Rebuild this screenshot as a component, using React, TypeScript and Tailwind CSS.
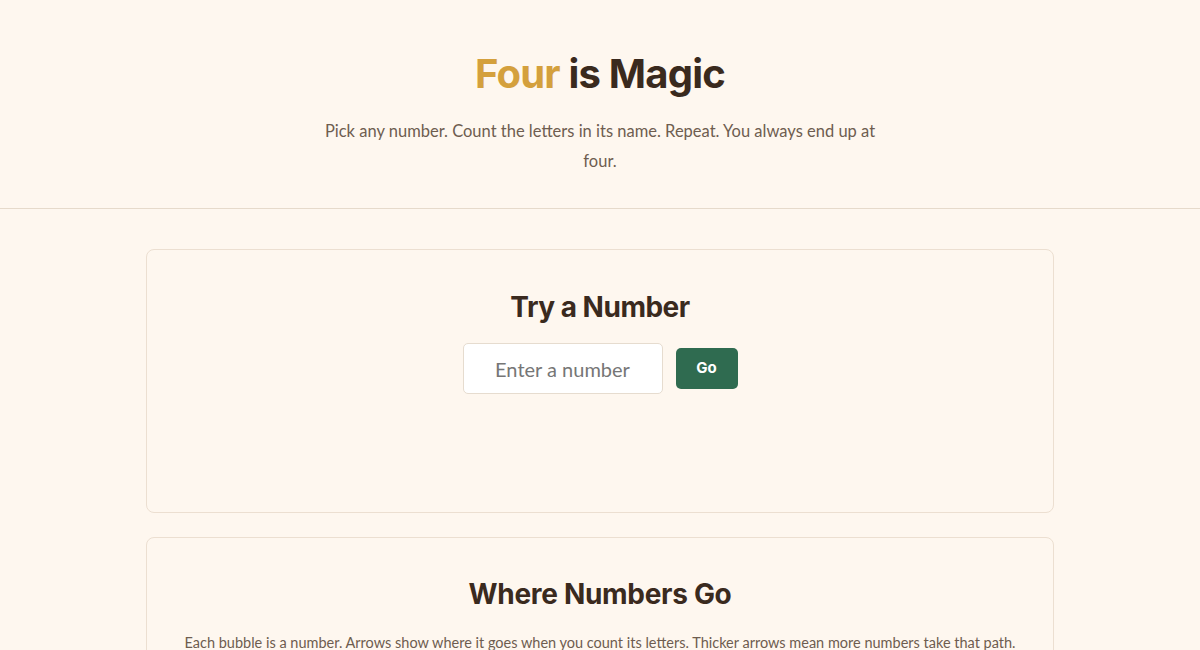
export default function App() {
    return (
        <div className="min-h-screen bg-[#fef7ef] text-[#3a2a1e]" style={{ fontFamily: 'Lato, "Open Sans", sans-serif' }}>
            {/* Header */}
            <header className="pt-[50px] pb-[32px] px-4 text-center border-b border-[#e6dacb]">
                <h1 className="text-[40px] leading-[48px] font-bold tracking-[-0.8px]" style={{ fontFamily: 'Inter, sans-serif' }}>
                    <span className="text-[#d4a03d]">Four</span> is Magic
                </h1>
                <p className="mt-[18px] mx-auto max-w-[575px] text-[16.5px] leading-[30px] text-[#6e5d50]">
                    Pick any number. Count the letters in its name. Repeat. You always end up at four.
                </p>
            </header>

            <main className="max-w-[908px] mx-auto pt-[40px] pb-10 flex flex-col gap-[24px]">
                {/* Try a number */}
                <section className="border border-[#ecdfd1] rounded-lg px-8 pt-[39px] pb-[118px] text-center">
                    <h2 className="text-[28px] leading-[36px] font-bold tracking-[-0.5px]" style={{ fontFamily: 'Inter, sans-serif' }}>
                        Try a Number
                    </h2>
                    <div className="mt-[18px] flex items-center justify-center gap-[13px]">
                        <input
                            type="text"
                            placeholder="Enter a number"
                            className="w-[200px] h-[51px] bg-white border border-[#e6dccf] rounded-[5px] text-center text-[20px] text-[#3a2a1e] placeholder:text-[#767676] outline-none"
                        />
                        <button className="w-[62px] h-[41px] bg-[#2f6b50] text-white text-[15px] font-bold rounded-[5px]" style={{ fontFamily: 'Inter, sans-serif' }}>
                            Go
                        </button>
                    </div>
                </section>

                {/* Where numbers go */}
                <section className="border border-[#ecdfd1] rounded-lg px-8 pt-[38px] pb-10 text-center">
                    <h2 className="text-[28px] leading-[36px] font-bold tracking-[-0.3px]" style={{ fontFamily: 'Inter, sans-serif' }}>
                        Where Numbers Go
                    </h2>
                    <p className="mt-[19px] text-[14.5px] leading-[24px] text-[#6e5d50]">
                        Each bubble is a number. Arrows show where it goes when you count its letters. Thicker arrows mean more numbers take that path.
                    </p>
                </section>
            </main>
        </div>
    );
}
